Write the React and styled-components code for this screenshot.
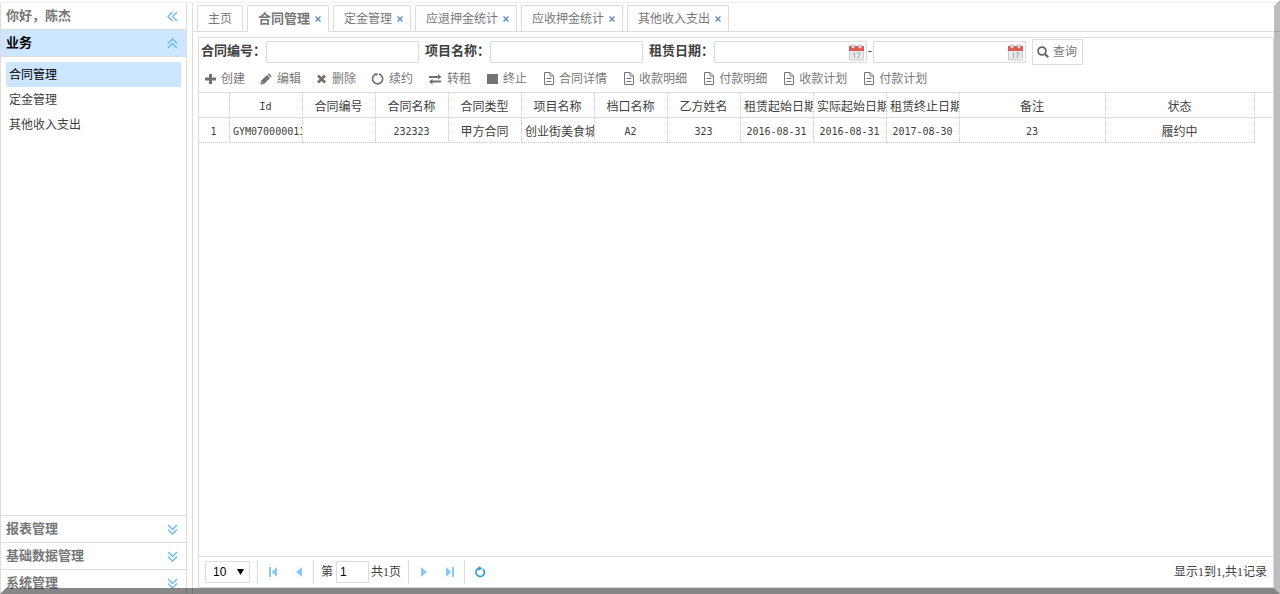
import React, { useState } from 'react';
import styled, { createGlobalStyle } from 'styled-components';

const GlobalStyle = createGlobalStyle`
    * { box-sizing: border-box; }
    body {
        margin: 0;
        overflow: hidden;
        background: #fff;
        color: #404040;
        font-family: "Liberation Serif", "Noto Sans CJK SC", serif;
        font-size: 12px;
        line-height: 16px;
    }
    button, input, select { font: inherit; color: inherit; margin: 0; padding: 0; }
`;

const Page = styled.div`
    display: flex;
    flex-direction: column;
    height: 100vh;
`;

const TopLine = styled.div`
    flex: none;
    height: 3px;
    border-bottom: 1px solid #eee;
`;

const Columns = styled.div`
    flex: 1;
    min-height: 0;
    display: flex;
    gap: 5px;
`;

const Frame = styled.div`
    position: fixed;
    inset: 0;
    pointer-events: none;
    border: 6px solid transparent;
    border-right-color: rgba(0, 0, 0, 0.26);
    border-bottom-color: rgba(0, 0, 0, 0.47);
`;

/* sidebar */
const Sidebar = styled.aside`
    flex: none;
    display: flex;
    flex-direction: column;
    width: 187px;
    margin-bottom: -2px;
    border: 1px solid #ddd;
    border-width: 0 1px;
`;

const SideTitle = styled.div`
    flex: none;
    display: flex;
    align-items: center;
    justify-content: space-between;
    height: 26px;
    padding: 0 8px 0 5px;
    font-size: 13px;
    font-weight: bold;
    color: #777;
`;

const SideHead = styled.button`
    flex: none;
    display: flex;
    align-items: center;
    justify-content: space-between;
    height: 27px;
    padding: 0 8px 0 5px;
    border: 0;
    border-top: 1px solid #ddd;
    font-size: 13px;
    font-weight: bold;
    background: ${p => (p.$open ? '#cce6ff' : '#fff')};
    color: ${p => (p.$open ? '#000' : '#777')};
`;

const SideBody = styled.nav`
    flex: 1;
    min-height: 0;
    padding: 5px;
    border-top: 1px solid #ddd;
`;

const SideLink = styled.a`
    display: block;
    height: 25px;
    padding: 0 3px;
    line-height: 26px;
    text-decoration: none;
    color: ${p => (p.$active ? '#000' : '#404040')};
    background: ${p => (p.$active ? '#cce6ff' : 'transparent')};
`;

/* main area */
const Main = styled.main`
    flex: 1;
    min-width: 0;
    display: flex;
    flex-direction: column;
    border-left: 1px solid #ddd;
`;

const Tabs = styled.div`
    flex: none;
    display: flex;
    gap: 4px;
    height: 29px;
    padding: 2px 4px 0;
    border-bottom: 1px solid #ddd;
`;

const Tab = styled.div`
    display: flex;
    align-items: center;
    gap: 4px;
    height: ${p => (p.$active ? 27 : 26)}px;
    padding: 0 ${p => (p.$closable ? 6 : 10)}px 0 10px;
    border: 1px solid #ddd;
    border-bottom: 0;
    background: #fff;
`;

const TabLabel = styled.button`
    border: 0;
    background: none;
    white-space: nowrap;
    color: #777;
    font-size: ${p => (p.$active ? 13 : 12)}px;
    font-weight: ${p => (p.$active ? 'bold' : 'normal')};
`;

const TabClose = styled.button`
    display: flex;
    border: 0;
    background: none;
    color: #6a90cb;
`;

const Panel = styled.section`
    flex: 1;
    min-height: 0;
    display: flex;
    flex-direction: column;
    margin: 5px 6px 6px 5px;
    border: 1px solid #ddd;
`;

const SearchBar = styled.form`
    flex: none;
    display: flex;
    align-items: center;
    height: 28px;
    padding: 0 2px;
`;

const Label = styled.label`
    flex: none;
    width: 65px;
    padding-bottom: 2px;
    font-size: 13px;
    font-weight: bold;
    white-space: nowrap;
`;

const Field = styled.div`
    flex: none;
    display: flex;
    align-items: center;
    width: 153px;
    height: 22px;
    margin-right: ${p => (p.$joined ? 0 : 6)}px;
    border: 1px solid #ddd;
`;

const FieldInput = styled.input`
    flex: 1;
    min-width: 0;
    height: 20px;
    padding: 0 4px;
    border: 0;
    outline: 0;
    background: none;
`;

const DateButton = styled.button`
    display: flex;
    margin-right: 2px;
    border: 0;
    background: none;
`;

const Dash = styled.span`
    width: 6px;
    padding-bottom: 2px;
    text-align: center;
`;

const SearchButton = styled.button`
    flex: none;
    display: flex;
    align-items: center;
    gap: 4px;
    height: 26px;
    padding: 0 5px 0 4px;
    border: 1px solid #ddd;
    background: #fff;
    color: #777;
    white-space: nowrap;
`;

const Toolbar = styled.div`
    flex: none;
    display: flex;
    gap: 15px;
    height: 26px;
    padding: 0 6px;
`;

const ToolButton = styled.button`
    display: flex;
    align-items: center;
    gap: 5px;
    border: 0;
    background: none;
    color: #777;
    white-space: nowrap;

    svg { margin-bottom: 1px; }
`;

const GridArea = styled.div`
    flex: 1;
    min-height: 0;
    overflow: hidden;
    border-top: 1px solid #ddd;
    background: linear-gradient(#ddd, #ddd) 0 24px / 100% 1px no-repeat;
`;

const Grid = styled.table`
    width: 1056px;
    table-layout: fixed;
    border-collapse: separate;
    border-spacing: 0;
    text-align: center;

    th, td {
        height: 25px;
        padding: 0;
        font-weight: normal;
        border-right: 1px dotted #ccc;
    }
    th { border-bottom: 1px solid #ddd; }
    td { border-bottom: 1px dotted #ccc; }
`;

const Cell = styled.div`
    overflow: hidden;
    padding: 3px 4px 0 3px;
    white-space: nowrap;
    line-height: 18px;
    font-family: "DejaVu Sans Mono", "Noto Sans CJK SC", monospace;
    font-size: ${p => (p.$latin ? 10 : 12)}px;
`;

const Pager = styled.div`
    flex: none;
    display: flex;
    align-items: center;
    height: 31px;
    padding: 0 6px;
    border-top: 1px solid #ddd;
`;

const SizeBox = styled.div`
    position: relative;
    display: flex;
    width: 45px;
    height: 22px;
    margin-right: 7px;

    svg {
        position: absolute;
        right: 6px;
        top: 8px;
        pointer-events: none;
    }
`;

const SizeSelect = styled.select`
    appearance: none;
    width: 100%;
    padding-left: 7px;
    border: 1px solid #ddd;
    border-radius: 0;
    background: #fff;
    color: #000;
    font-family: "Liberation Sans", Arial, sans-serif;
    font-size: 12px;
`;

const PageInput = styled.input`
    width: 33px;
    height: 22px;
    margin: 0 2px 0 3px;
    padding: 0 3px;
    border: 1px solid #ddd;
    color: #000;
    font-family: "Liberation Sans", Arial, sans-serif;
    font-size: 12px;
`;

const PageGroup = styled.div`
    display: flex;
    align-items: center;
    height: 24px;
    padding: ${p => (p.$text ? '0 7px' : '0 1px 0 2px')};
    border-left: 1px solid #ddd;
`;

const PageButton = styled.button`
    display: flex;
    align-items: center;
    justify-content: center;
    width: 26px;
    height: 24px;
    border: 0;
    background: none;
    color: ${p => (p.$strong ? '#3399dd' : '#8cc8f4')};
`;

const PageInfo = styled.div`
    margin-left: auto;
    white-space: nowrap;
`;

const Chevrons = ({ turn = 0 }) => (
    <svg width="11" height="11" viewBox="0 0 11 11" fill="none" stroke="#6bb6ec" strokeWidth="1.3">
        <path transform={`rotate(${turn} 5.5 5.5)`} d="M5.5 1 1 5.5 5.5 10M10 1 5.5 5.5 10 10" />
    </svg>
);

const CloseIcon = () => (
    <svg width="8" height="8" viewBox="0 0 8 8" fill="none" stroke="currentColor" strokeWidth="1.5">
        <path d="M1.500 1.500 6.500 6.500M6.500 1.500 1.500 6.500" />
    </svg>
);

const CalendarIcon = () => (
    <svg width="15" height="17" viewBox="0 0 15 17">
        <path d="M.5 6h14v10H.5z" fill="#e9e9e9" stroke="#ccc" />
        <path d="M0 2h15v5H0z" fill="#e05a55" />
        <path d="M2.5 1h3v3h-3zM9.500 1h3v3h-3z" fill="#eee" stroke="#b99" strokeWidth=".7" />
        <path d="M4.500 9.500 5.500 9v5M8 9h3l-2 5" fill="none" stroke="#aaa" />
        <path d="M11 16.500 14.500 13v3.500z" fill="#fff" stroke="#ccc" strokeWidth=".6" />
    </svg>
);

const SearchIcon = () => (
    <svg width="12" height="12" viewBox="0 0 12 12" fill="none" stroke="#666">
        <circle cx="5" cy="5" r="3.900" strokeWidth="1.8" />
        <path d="M8 8l3.200 3.200" strokeWidth="2.2" />
    </svg>
);

const PlusIcon = () => (
    <svg width="11" height="12" viewBox="0 0 11 12">
        <path d="M4 1h3v3.500h4v3H7V11H4V7.500H0v-3h4z" fill="#707070" />
    </svg>
);

const PencilIcon = () => (
    <svg width="12" height="12" viewBox="0 0 12 12" fill="#707070">
        <path d="M.5 11.500 1.200 7.700 7 1.900l3.100 3.100-5.800 5.800z" />
        <path d="M7.700 1.200 8.800.2 11.800 3.200 10.700 4.300z" />
        <path d="M1.900 8.900 3.200 10.200" stroke="#fff" strokeWidth=".8" />
    </svg>
);

const RemoveIcon = () => (
    <svg width="11" height="12" viewBox="0 0 11 12">
        <path d="M2 2.500 9 9.500M9 2.500 2 9.500" stroke="#707070" strokeWidth="2.800" />
    </svg>
);

const RenewIcon = () => (
    <svg width="13" height="12" viewBox="0 0 13 12" fill="none" stroke="#707070" strokeWidth="1.6">
        <path d="M5.300 1a5 5 0 1 0 2.600 0M3.500 1h2.300v1.500" />
    </svg>
);

const ExchangeIcon = () => (
    <svg width="14" height="12" viewBox="0 0 14 12" fill="#707070">
        <path d="M1 3h9V1l3.500 3L10 6.500V5H1z" />
        <path d="M13 7.500H4.500V5.800L1 8.700l3.500 2.800V9.500H13z" />
    </svg>
);

const StopIcon = () => (
    <svg width="12" height="12" viewBox="0 0 12 12">
        <path d="M1 1h11v10H1z" fill="#747474" />
    </svg>
);

const FileIcon = () => (
    <svg width="12" height="13" viewBox="0 0 12 13" fill="none" stroke="#77728c">
        <path d="M2.500 .5h5.500l3.500 3.500v8.500h-9zM8 .5v3.500h3.500M4.500 6.500h5M4.500 9.500h5" />
    </svg>
);

const FirstIcon = () => (
    <svg width="10" height="10" viewBox="0 0 10 10" fill="currentColor">
        <path d="M1 0h2v10H1zM9 0v10L3.500 5z" />
    </svg>
);

const PrevIcon = () => (
    <svg width="10" height="10" viewBox="0 0 10 10" fill="currentColor">
        <path d="M8 0v10L2 5z" />
    </svg>
);

const NextIcon = () => (
    <svg width="10" height="10" viewBox="0 0 10 10" fill="currentColor">
        <path d="M2 0v10l6-5z" />
    </svg>
);

const LastIcon = () => (
    <svg width="10" height="10" viewBox="0 0 10 10" fill="currentColor">
        <path d="M7 0h2v10H7zM1 0v10l5.500-5z" />
    </svg>
);

const RefreshIcon = () => (
    <svg width="12" height="12" viewBox="0 0 12 12">
        <path d="M9 3.200a4.200 4.200 0 1 1-4-.9" fill="none" stroke="currentColor" strokeWidth="1.700" />
        <path d="M4.500 0 8.500 2.200 4.500 4.800z" fill="currentColor" />
    </svg>
);

const menu = ['合同管理', '定金管理', '其他收入支出'];
const closedGroups = ['报表管理', '基础数据管理', '系统管理'];
const tabs = ['主页', '合同管理', '定金管理', '应退押金统计', '应收押金统计', '其他收入支出'];

const tools = [
    ['创建', PlusIcon],
    ['编辑', PencilIcon],
    ['删除', RemoveIcon],
    ['续约', RenewIcon],
    ['转租', ExchangeIcon],
    ['终止', StopIcon],
    ['合同详情', FileIcon],
    ['收款明细', FileIcon],
    ['付款明细', FileIcon],
    ['收款计划', FileIcon],
    ['付款计划', FileIcon],
];

const columns = [
    ['', 31],
    ['Id', 73],
    ['合同编号', 73],
    ['合同名称', 73],
    ['合同类型', 73],
    ['项目名称', 73],
    ['档口名称', 73],
    ['乙方姓名', 73],
    ['租赁起始日期', 73],
    ['实际起始日期', 73],
    ['租赁终止日期', 73],
    ['备注', 146],
    ['状态', 149],
];

const rows = [
    ['1', 'GYM070000011', '', '232323', '甲方合同', '创业街美食城', 'A2', '323', '2016-08-31', '2016-08-31', '2017-08-30', '23', '履约中'],
];

const isLatin = text => /^[\x20-\x7e]+$/.test(text);

const DateField = ({ id, label, joined }) => (
    <Field $joined={joined}>
        <FieldInput id={id} aria-label={label} />
        <DateButton type="button" aria-label="选择日期"><CalendarIcon /></DateButton>
    </Field>
);

const App = () => {
    const [activeTab, setActiveTab] = useState('合同管理');
    const [activeMenu, setActiveMenu] = useState('合同管理');

    return (
        <Page>
            <GlobalStyle />
            <TopLine />
            <Columns>
                <Sidebar>
                    <SideTitle>你好，陈杰<Chevrons /></SideTitle>
                    <SideHead $open>业务<Chevrons turn={90} /></SideHead>
                    <SideBody>
                        {menu.map(name => (
                            <SideLink key={name} href="#" $active={name === activeMenu} onClick={() => setActiveMenu(name)}>
                                {name}
                            </SideLink>
                        ))}
                    </SideBody>
                    {closedGroups.map(name => (
                        <SideHead key={name}>{name}<Chevrons turn={-90} /></SideHead>
                    ))}
                </Sidebar>

                <Main>
                    <Tabs>
                        {tabs.map((name, i) => (
                            <Tab key={name} $active={name === activeTab} $closable={i > 0}>
                                <TabLabel $active={name === activeTab} onClick={() => setActiveTab(name)}>{name}</TabLabel>
                                {i > 0 && <TabClose aria-label="关闭"><CloseIcon /></TabClose>}
                            </Tab>
                        ))}
                    </Tabs>

                    <Panel>
                        <SearchBar onSubmit={e => e.preventDefault()}>
                            <Label htmlFor="code">合同编号：</Label>
                            <Field><FieldInput id="code" /></Field>
                            <Label htmlFor="project">项目名称：</Label>
                            <Field><FieldInput id="project" /></Field>
                            <Label htmlFor="from">租赁日期：</Label>
                            <DateField id="from" joined />
                            <Dash>-</Dash>
                            <DateField id="to" label="租赁日期止" />
                            <SearchButton><SearchIcon />查询</SearchButton>
                        </SearchBar>
                        <Toolbar>
                            {tools.map(([name, Icon]) => (
                                <ToolButton key={name}><Icon />{name}</ToolButton>
                            ))}
                        </Toolbar>

                        <GridArea>
                            <Grid>
                                <colgroup>
                                    {columns.map(([name, width]) => <col key={name} width={width} />)}
                                </colgroup>
                                <thead>
                                    <tr>
                                        {columns.map(([name]) => <th key={name}><Cell $latin={isLatin(name)}>{name}</Cell></th>)}
                                    </tr>
                                </thead>
                                <tbody>
                                    {rows.map(row => (
                                        <tr key={row[1]}>
                                            {row.map((text, i) => <td key={i}><Cell $latin={isLatin(text)}>{text}</Cell></td>)}
                                        </tr>
                                    ))}
                                </tbody>
                            </Grid>
                        </GridArea>

                        <Pager>
                            <SizeBox>
                                <SizeSelect aria-label="每页条数" defaultValue="10">
                                    <option>10</option>
                                    <option>20</option>
                                    <option>50</option>
                                </SizeSelect>
                                <svg width="7" height="6" viewBox="0 0 7 6"><path d="M0 0h7L3.500 6z" fill="#000" /></svg>
                            </SizeBox>
                            <PageGroup>
                                <PageButton aria-label="首页"><FirstIcon /></PageButton>
                                <PageButton aria-label="上一页"><PrevIcon /></PageButton>
                            </PageGroup>
                            <PageGroup $text>
                                <label htmlFor="page">第</label>
                                <PageInput id="page" defaultValue="1" />
                                共1页
                            </PageGroup>
                            <PageGroup>
                                <PageButton aria-label="下一页"><NextIcon /></PageButton>
                                <PageButton aria-label="末页"><LastIcon /></PageButton>
                            </PageGroup>
                            <PageGroup>
                                <PageButton aria-label="刷新" $strong><RefreshIcon /></PageButton>
                            </PageGroup>
                            <PageInfo>显示1到1,共1记录</PageInfo>
                        </Pager>
                    </Panel>
                </Main>
            </Columns>
            <Frame />
        </Page>
    );
};

export default App;
